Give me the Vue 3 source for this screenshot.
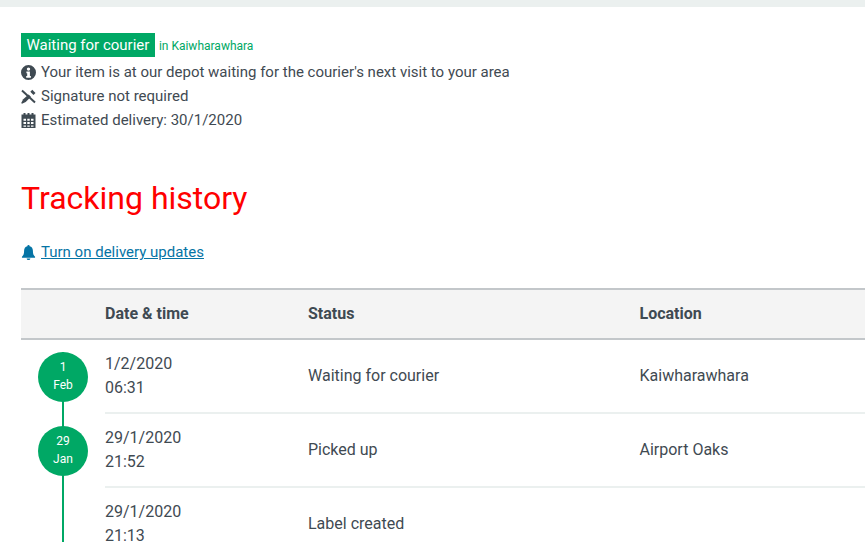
<script setup>
const rows = [
  { day: '1', month: 'Feb', date: '1/2/2020', time: '06:31', status: 'Waiting for courier', location: 'Kaiwharawhara' },
  { day: '29', month: 'Jan', date: '29/1/2020', time: '21:52', status: 'Picked up', location: 'Airport Oaks' },
  { date: '29/1/2020', time: '21:13', status: 'Label created', location: '' }
]
</script>

<template>
  <div class="page">
    <div class="top-bar"></div>
    <div class="content">
      <div class="summary">
        <div class="badge-row">
          <span class="badge">Waiting for courier</span>
          <span class="place">in Kaiwharawhara</span>
        </div>
        <p class="info">
          <svg class="icon" viewBox="0 0 15 15"><path fill="#3f4a52" fill-rule="evenodd" d="M7.500 0a7.500 7.500 0 1 0 0 15 7.500 7.500 0 0 0 0-15zM7.500 2.400a1.700 1.700 0 1 1 0 3.400 1.700 1.700 0 0 1 0-3.400zM5.400 6.600h3.500v4.500h1v1.700H5.200v-1.700h1V8.300h-.8z"/></svg>
          Your item is at our depot waiting for the courier's next visit to your area
        </p>
        <p class="info">
          <svg class="icon" viewBox="0 0 15 15">
            <path fill="none" stroke="#3f4a52" stroke-width="2" d="M1 1.500l13 12"/>
            <path fill="#3f4a52" d="M7.600 5.400l2.300 2.300-5.200 5.200-3.700 1.900-.8-.8 2-3.700z"/>
            <path fill="#3f4a52" d="M11.300.800l3.200 3.200-2 2-3.200-3.200z"/>
          </svg>
          Signature not required
        </p>
        <p class="info">
          <svg class="icon" viewBox="0 0 15 15"><path fill="#3f4a52" fill-rule="evenodd" d="M.500 1.500h2V0h2v1.500h2V0h2v1.500h2V0h2v1.500h2V15H.500zM2.500 5.700v2.100h2.500V5.700zM6.300 5.700v2.100h2.400V5.700zM10 5.700v2.100h2.500V5.700zM2.500 9.100v2h2.500v-2zM6.300 9.100v2h2.400v-2zM10 9.100v2h2.500v-2zM2.500 12.400v1.300h2.500v-1.300zM6.300 12.400v1.300h2.400v-1.300zM10 12.400v1.300h2.500v-1.300z"/></svg>
          Estimated delivery: 30/1/2020
        </p>
      </div>

      <h1 class="title">Tracking history</h1>

      <div class="updates">
        <svg class="icon" viewBox="0 0 16 16"><path fill="#0574a5" d="M8 0a1.200 1.200 0 0 0-1.200 1.300C4.500 1.900 3.300 3.700 3.300 6c0 3.500-.7 5-2.300 6.500v1h14v-1C13.400 11 12.700 9.500 12.700 6c0-2.300-1.200-4.100-3.500-4.700A1.200 1.200 0 0 0 8 0zM6 14.300a2 1.700 0 0 0 4 0z"/></svg>
        <a class="updates-link" href="#">Turn on delivery updates</a>
      </div>

      <div class="table">
        <div class="row head">
          <div class="col-mark"></div>
          <div class="col-date">Date &amp; time</div>
          <div class="col-status">Status</div>
          <div class="col-location">Location</div>
        </div>
        <div v-for="(row, i) in rows" :key="i" class="row body-row">
          <div class="col-mark">
            <span class="line" :class="{ first: i === 0, last: i === rows.length - 1 }"></span>
            <span v-if="row.day" class="dot">{{ row.day }}<br />{{ row.month }}</span>
          </div>
          <div class="col-date cell">{{ row.date }}<br />{{ row.time }}</div>
          <div class="col-status cell">{{ row.status }}</div>
          <div class="col-location cell">{{ row.location }}</div>
        </div>
      </div>
    </div>
  </div>
</template>

<style scoped>
.page {
  height: 552px;
  overflow: hidden;
  background: #fff;
  font-family: Roboto, "Liberation Sans", sans-serif;
  font-size: 15px;
  color: #3f4a52;
}
.top-bar {
  height: 7px;
  background: #ebf0ef;
}
.content {
  padding: 26px 0 0 21px;
}
.badge-row {
  display: flex;
  align-items: center;
  height: 24px;
  margin-bottom: 3px;
}
.badge {
  background: #00a865;
  color: #fff;
  height: 24px;
  line-height: 24px;
  padding: 0 5.500px;
}
.place {
  color: #00a865;
  font-size: 12px;
  margin-left: 4px;
  padding-top: 1px;
}
.info {
  display: flex;
  align-items: center;
  gap: 5px;
  height: 24px;
  margin: 0;
}
.icon {
  width: 15px;
  height: 15px;
  flex: none;
}
.title {
  margin: 44px 0 0;
  height: 44px;
  line-height: 44px;
  color: #f00;
  font-size: 32px;
  font-weight: 400;
}
.updates {
  display: flex;
  align-items: center;
  gap: 5px;
  height: 24px;
  margin-top: 20px;
}
.updates-link {
  color: #0574a5;
}
.table {
  margin-top: 24px;
  font-size: 16px;
}
.row {
  display: flex;
}
.head {
  height: 46px;
  padding-bottom: 2px;
  align-items: center;
  background: #f4f4f4;
  border-top: 2px solid #c3c7ca;
  border-bottom: 2px solid #c3c7ca;
  font-weight: 700;
}
.body-row {
  height: 74px;
}
.col-mark {
  position: relative;
  width: 84px;
  flex: none;
}
.col-date {
  width: 203px;
  flex: none;
}
.col-status {
  width: 331.500px;
  flex: none;
}
.col-location {
  flex: 1;
}
.cell {
  display: flex;
  align-items: center;
  border-bottom: 2px solid #ebf0ef;
  line-height: 24px;
  box-sizing: border-box;
}
.col-date.cell {
  display: block;
  padding-top: 12px;
}
.line {
  position: absolute;
  left: 41px;
  top: 0;
  bottom: 0;
  width: 2px;
  background: #00a865;
}
.line.first {
  top: 12px;
}
.line.last {
  bottom: 20px;
}
.dot {
  position: absolute;
  left: 17px;
  top: 12px;
  width: 50px;
  height: 50px;
  border-radius: 50%;
  background: #00a865;
  color: #fff;
  font-size: 12px;
  line-height: 18px;
  text-align: center;
  padding-top: 6px;
  box-sizing: border-box;
}
</style>
